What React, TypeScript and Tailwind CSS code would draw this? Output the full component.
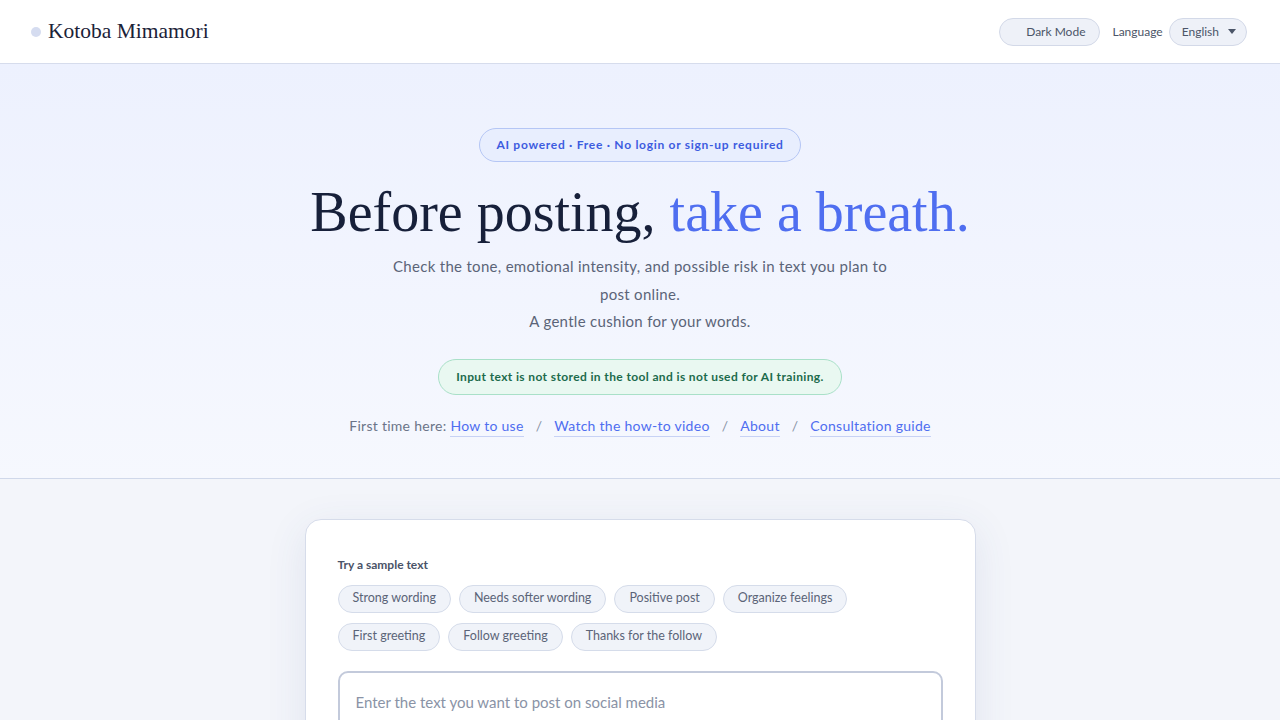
import React from "react";

const serif = { fontFamily: '"Liberation Serif", "DejaVu Serif", serif' };

const samplesRow1 = ["Strong wording", "Needs softer wording", "Positive post", "Organize feelings"];
const samplesRow2 = ["First greeting", "Follow greeting", "Thanks for the follow"];

function Chip({ label }: { label: string }) {
  return (
    <button className="h-[28px] rounded-full border border-[#d5dcea] bg-[#f0f3f9] px-[14px] text-[12.5px] text-[#5b6478]">
      {label}
    </button>
  );
}

export default function App() {
  return (
    <div
      className="min-h-screen bg-[#f3f5fa] text-[#1b2238]"
      style={{ fontFamily: 'Lato, "Noto Sans", sans-serif' }}
    >
      {/* Top bar */}
      <header className="flex h-[64px] items-center justify-between border-b border-[#d6dcec] bg-white pl-[31px] pr-[33px]">
        <div className="flex items-center gap-[7px]">
          <span className="h-[10px] w-[10px] rounded-full bg-[#d5dcf0]" />
          <span className="text-[21.5px] text-[#1b2238]" style={serif}>
            Kotoba Mimamori
          </span>
        </div>
        <div className="flex items-center">
          <button className="h-[28px] rounded-full border border-[#d3d9e8] bg-[#eef1f8] pl-[26px] pr-[14px] text-[12px] text-[#4b5568]">
            Dark Mode
          </button>
          <span className="ml-[12px] text-[12px] text-[#4b5568]">Language</span>
          <button className="ml-[6px] flex h-[28px] items-center gap-[9px] rounded-full border border-[#d3d9e8] bg-[#eef1f8] pl-[12px] pr-[10px] text-[12px] text-[#4b5568]">
            English
            <svg width="8" height="5" viewBox="0 0 8 5">
              <path d="M0 0h8L4 5z" fill="#4b5568" />
            </svg>
          </button>
        </div>
      </header>

      {/* Hero */}
      <section className="flex flex-col items-center border-b border-[#d0d8ea] bg-gradient-to-b from-[#edf1fe] to-[#f6f8fe] pb-[41px] pt-[64px]">
        <div className="flex h-[34px] items-center rounded-full border border-[#b5c6f5] bg-[#e8eefe] px-[16px] text-[12px] font-bold tracking-[0.06em] text-[#3d5ce0]">
          AI powered · Free · No login or sign-up required
        </div>
        <h1 className="mt-[18px] text-[56px] leading-[64px] text-[#17203a]" style={serif}>
          Before posting, <span className="text-[#4f6ef0]">take a breath.</span>
        </h1>
        <p className="mt-[9px] max-w-[510px] text-center text-[15px] leading-[27.5px] tracking-[0.3px] text-[#5b6478]">
          Check the tone, emotional intensity, and possible risk in text you plan to post online.
          <br />
          A gentle cushion for your words.
        </p>
        <div className="mt-[23px] flex h-[36px] items-center rounded-full border border-[#a9e0c8] bg-[#e9f8f1] px-[17px] text-[12px] font-bold tracking-[0.38px] text-[#1c6b4c]">
          Input text is not stored in the tool and is not used for AI training.
        </div>
        <div className="mt-[20px] flex items-center text-[14px] tracking-[0.28px] text-[#6b7488]">
          <span className="mr-[4px]">First time here:</span>
          <a className="border-b border-[#c7d2f5] text-[#4f6ef0]">How to use</a>
          <span className="mx-[12px] text-[#8a93a6]">/</span>
          <a className="border-b border-[#c7d2f5] text-[#4f6ef0]">Watch the how-to video</a>
          <span className="mx-[12px] text-[#8a93a6]">/</span>
          <a className="border-b border-[#c7d2f5] text-[#4f6ef0]">About</a>
          <span className="mx-[12px] text-[#8a93a6]">/</span>
          <a className="border-b border-[#c7d2f5] text-[#4f6ef0]">Consultation guide</a>
        </div>
      </section>

      {/* Checker card */}
      <main className="flex justify-center pt-[40px]">
        <div className="w-[671px] rounded-[16px] border border-[#d6dcea] bg-white px-[32px] pt-[36px] pb-[32px] shadow-[0_10px_40px_rgba(60,80,140,0.10)]">
          <div className="text-[12px] font-bold text-[#4a5368]">Try a sample text</div>
          <div className="mt-[11px] flex flex-wrap gap-[8px]">
            {samplesRow1.map((s) => (
              <Chip key={s} label={s} />
            ))}
          </div>
          <div className="mt-[10px] flex flex-wrap gap-[8px]">
            {samplesRow2.map((s) => (
              <Chip key={s} label={s} />
            ))}
          </div>
          <textarea
            className="mt-[20px] h-[160px] w-full resize-none rounded-[10px] border-2 border-[#c3cadb] px-[16px] py-[18px] text-[15px] text-[#1b2238] outline-none placeholder:text-[#8a93a6]"
            placeholder="Enter the text you want to post on social media"
          />
        </div>
      </main>
    </div>
  );
}
